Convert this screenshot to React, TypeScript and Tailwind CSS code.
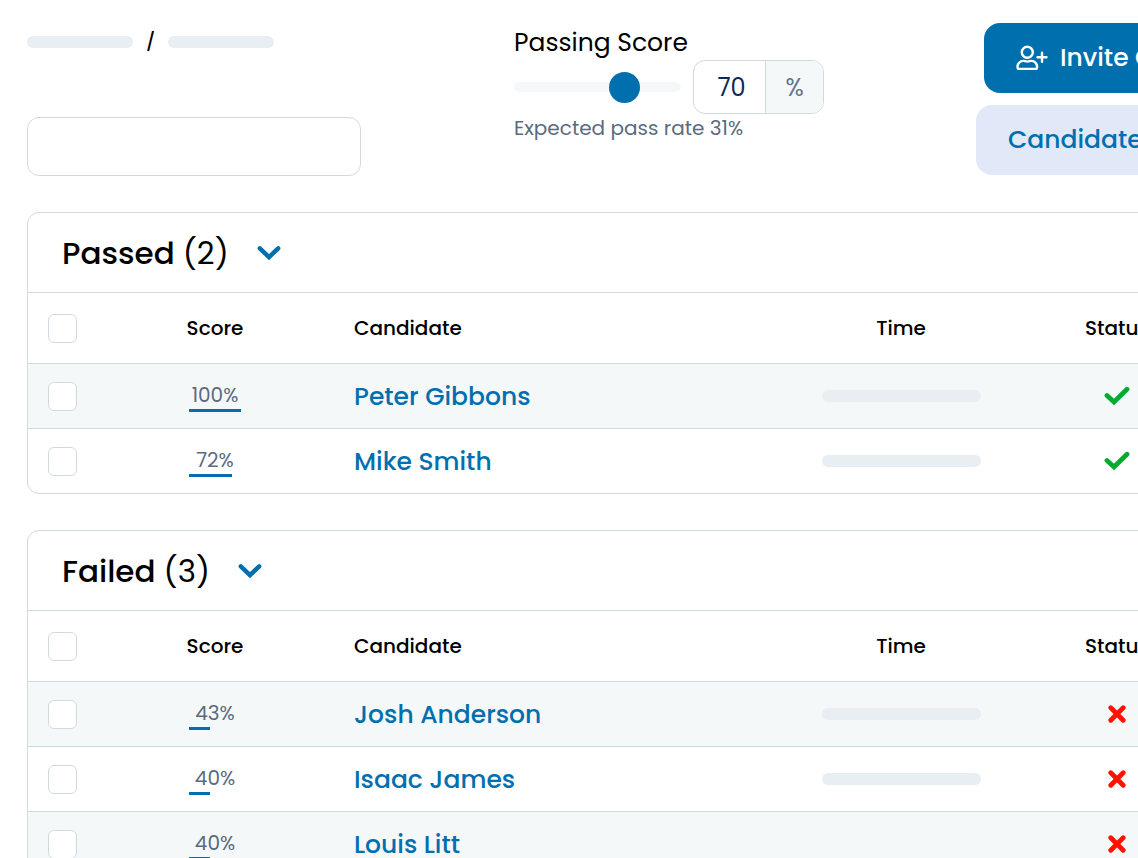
import React, { useState } from "react";

type Candidate = {
  name: string;
  score: number;
  bar: string;
  hasTime: boolean;
};

const passed: Candidate[] = [
  { name: "Peter Gibbons", score: 100, bar: "w-[52px]", hasTime: true },
  { name: "Mike Smith", score: 72, bar: "w-[43px]", hasTime: true },
];

const failed: Candidate[] = [
  { name: "Josh Anderson", score: 43, bar: "w-[21px]", hasTime: true },
  { name: "Isaac James", score: 40, bar: "w-[21px]", hasTime: true },
  { name: "Louis Litt", score: 40, bar: "w-[21px]", hasTime: false },
];

const UserPlusIcon = () => (
  <svg className="shrink-0" width="32" height="26" viewBox="0 0 32 26" fill="none" stroke="currentColor" strokeWidth="2.4" strokeLinecap="round" strokeLinejoin="round" aria-hidden="true">
    <circle cx="11.3" cy="7.2" r="5.5" />
    <path d="M7.3 15.9C4 15.9 1.5 18.4 1.5 21.6v.6c0 1 .7 1.7 1.7 1.7h16.200c1 0 1.700-.7 1.700-1.700v-.6c0-3.200-2.500-5.700-5.800-5.700-1.400 0-2.200.7-4 .7s-2.600-.7-4-.7Z" />
    <path d="M21.5 12.3h9M26 7.8v9" />
  </svg>
);

const ChevronIcon = () => (
  <svg width="24" height="16" viewBox="0 0 24 16" fill="none" stroke="currentColor" strokeWidth="4.4" strokeLinecap="round" aria-hidden="true">
    <path d="M2.800 3.300 12 12.200l9.200-8.900" />
  </svg>
);

const CheckIcon = () => (
  <svg className="mx-auto text-[#00ab2e]" width="26" height="20" viewBox="0 0 26 20" fill="none" stroke="currentColor" strokeWidth="4.8" strokeLinecap="round" aria-hidden="true">
    <path d="M3 9.500 10 16 23 3.300" />
  </svg>
);

const CrossIcon = () => (
  <svg className="mx-auto text-[#ff1200]" width="18" height="18" viewBox="0 0 18 18" fill="none" stroke="currentColor" strokeWidth="4.8" strokeLinecap="round" aria-hidden="true">
    <path d="m2.800 2.800 12.400 12.400M15.200 2.800 2.800 15.200" />
  </svg>
);

const Checkbox = ({ label }: { label: string }) => (
  <input
    type="checkbox"
    aria-label={label}
    className="block size-[29px] appearance-none rounded-md border border-[#d3dade] bg-white checked:bg-[#006fae]"
  />
);

const ResultTable = ({ title, rows, pass }: { title: string; rows: Candidate[]; pass: boolean }) => {
  const [open, setOpen] = useState(true);

  return (
    <section className="overflow-hidden rounded-xl border border-[#d0d9dd]">
      <div className="flex h-20 items-center gap-7 border-b border-[#d0d9dd] px-[34px]">
        <h2 className="text-[31px] leading-10 font-medium">
          {title} <span className="font-normal">({rows.length})</span>
        </h2>
        <button type="button" aria-label={"Toggle " + title} onClick={() => setOpen(!open)} className="text-[#006fae]">
          <ChevronIcon />
        </button>
      </div>
      {open && (
        <table className="w-full table-fixed">
          <thead>
            <tr className="h-[70px] text-xl">
              <th className="w-[92px] pt-0.5 pl-5">
                <Checkbox label={"Select all " + title} />
              </th>
              <th className="w-[190px] font-medium">Score</th>
              <th className="pl-11 text-left font-medium">Candidate</th>
              <th className="w-[222px] font-medium">Time</th>
              <th className="w-[210px] font-medium">Status</th>
              <td className="w-20"></td>
            </tr>
          </thead>
          <tbody>
            {rows.map((row) => (
              <tr key={row.name} className="h-[65px] border-t border-[#d0d9dd] odd:bg-[#f4f8f9]">
                <td className="pt-0.5 pl-5">
                  <Checkbox label={"Select " + row.name} />
                </td>
                <td className="pt-0.5">
                  <div className="mx-auto w-[52px] text-center text-xl leading-7 text-[#5a6b80]">
                    {row.score}%
                    <div className={"h-[3px] bg-[#006fae] " + row.bar}></div>
                  </div>
                </td>
                <td className="pt-0.5 pl-11">
                  <a href="#" className="text-[25px] font-medium text-[#006fae]">{row.name}</a>
                </td>
                <td>
                  {row.hasTime && <div className="mx-auto h-3 w-[159px] rounded-full bg-[#e9eef2]"></div>}
                </td>
                <td>{pass ? <CheckIcon /> : <CrossIcon />}</td>
                <td></td>
              </tr>
            ))}
          </tbody>
        </table>
      )}
    </section>
  );
};

const App = () => {
  const [score, setScore] = useState(70);

  return (
    <div className="h-screen overflow-hidden bg-white font-['Poppins','Inter',sans-serif] text-black">
      <main className="min-w-[1307px] pt-[23px] pr-1 pl-[27px]">
        <header className="flex items-start">
          <div className="w-[487px] shrink-0">
            <div className="flex h-[38px] items-center gap-[13px] text-lg font-medium">
              <div className="h-3 w-[106px] rounded-full bg-[#e9eef2]"></div>
              <span>/</span>
              <div className="h-3 w-[106px] rounded-full bg-[#e9eef2]"></div>
            </div>
            <input
              type="text"
              aria-label="Search candidates"
              className="mt-14 block h-[59px] w-[334px] rounded-xl border border-[#d3dade] px-4 text-xl"
            />
          </div>

          <div className="w-[462px] shrink-0">
            <label htmlFor="passing-score" className="block h-[37px] text-[25px] leading-10">Passing Score</label>
            <div className="flex items-center gap-3">
              <input
                id="passing-score"
                type="range"
                min={0}
                max={100}
                value={score}
                onChange={(e) => setScore(Number(e.target.value))}
                className="h-2.5 w-[167px] appearance-none rounded-full bg-[#f5f8f9] [&::-webkit-slider-thumb]:size-[31px] [&::-webkit-slider-thumb]:appearance-none [&::-webkit-slider-thumb]:rounded-full [&::-webkit-slider-thumb]:bg-[#006fae]"
              />
              <div className="flex h-[54px] overflow-hidden rounded-xl border border-[#d0d9dd] text-2xl">
                <input
                  type="text"
                  aria-label="Passing score percent"
                  value={score}
                  onChange={(e) => setScore(Number(e.target.value) || 0)}
                  className="w-[71px] pt-0.5 pl-1 text-center text-[#0b2b55]"
                />
                <span className="flex w-[58px] items-center justify-center border-l border-[#d0d9dd] bg-[#f4f8f9] pt-0.5 text-[#64748b]">%</span>
              </div>
            </div>
            <p className="text-xl leading-7 text-[#5a6b80]">Expected pass rate 31%</p>
          </div>

          <div className="flex flex-1 flex-col gap-3 text-[25px] font-medium whitespace-nowrap">
            <button type="button" className="ml-2 flex h-[70px] items-center gap-3 rounded-2xl bg-[#006fae] px-8 text-white">
              <UserPlusIcon />
              Invite Candidates
            </button>
            <button type="button" className="flex h-[70px] items-center rounded-2xl bg-[#e1e9f9] px-8 text-[#006fae]">
              Candidate View
            </button>
          </div>
        </header>

        <div className="mt-9 flex flex-col gap-9">
          <ResultTable title="Passed" rows={passed} pass={true} />
          <ResultTable title="Failed" rows={failed} pass={false} />
        </div>
      </main>
    </div>
  );
};

export default App;
